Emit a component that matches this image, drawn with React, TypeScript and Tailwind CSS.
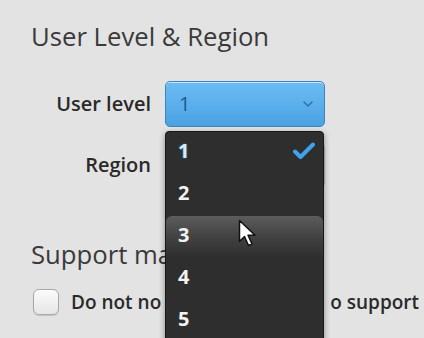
import { useState } from "react";

const levels = ["1", "2", "3", "4", "5"];

function Chevron() {
  return (
    <svg width="12" height="8" viewBox="0 0 12 8" fill="none">
      <path d="M2 2l4 4 4-4" stroke="#2f6fa8" strokeWidth="1.4" strokeLinecap="round" strokeLinejoin="round" />
    </svg>
  );
}

function Check() {
  return (
    <svg width="22" height="18" viewBox="0 0 22 18" fill="none">
      <path d="M2 9.5l5.5 5.5L20 2.5" stroke="#3ea3ea" strokeWidth="4" strokeLinecap="round" strokeLinejoin="round" />
    </svg>
  );
}

function Cursor() {
  return (
    <svg width="20" height="28" viewBox="0 0 20 28">
      <path d="M1.5 1.5v21l5-5 4 9 3.5-1.6-4-8.6h7z" fill="#fff" stroke="#111" strokeWidth="1.5" strokeLinejoin="round" />
    </svg>
  );
}

export default function App() {
  const [selected] = useState("1");
  const hovered = "3";

  return (
    <div className="h-[338px] w-[424px] overflow-hidden bg-[#e3e3e3] pl-[31px] pt-[20px] text-[#333] [font-family:'Open_Sans',sans-serif]">
      <h2 className="text-[25.7px] leading-[34px] font-normal text-[#3a3a3a]">User Level &amp; Region</h2>

      <div className="relative mt-[27px] grid grid-cols-[120px_160px] gap-x-[14px] gap-y-[15px] items-center">
        <span className="text-right text-[20px] font-semibold text-[#2a2a2a]">User level</span>
        <div className="flex h-[46px] items-center justify-between rounded-[5px] border border-[#3b84c0] bg-gradient-to-b from-[#6bbcf3] to-[#4aa2e3] pl-[13px] pr-[10px] shadow-[0_1px_0_#cfe6f7_inset]">
          <span className="text-[20px] text-[#1f5a92]">1</span>
          <Chevron />
        </div>

        <span className="text-right text-[20px] font-semibold text-[#2a2a2a]">Region</span>
        <div className="h-[46px] rounded-[5px] border border-[#b5b5b5] bg-[#f1f1f1]" />

        {/* open dropdown */}
        <div className="absolute left-[134px] top-[50px] z-10 w-[159px] overflow-hidden rounded-t-[4px] border border-[#181818] bg-[#2e2e2e] shadow-[0_2px_6px_rgba(0,0,0,0.4)]">
          {levels.map((level) => {
            const isSel = level === selected;
            const isHover = level === hovered;
            return (
              <div
                key={level}
                className={
                  isHover
                    ? "relative flex h-[42px] items-center justify-between rounded-t-[6px] bg-gradient-to-b from-[#5c5c5c] via-[#424242] to-[#2e2e2e] pb-[4px] pl-[12px] pr-[8px]"
                    : "flex h-[42px] items-center justify-between pb-[4px] pl-[12px] pr-[8px]"
                }
              >
                <span
                  className={
                    isSel
                      ? "text-[20px] font-bold text-[#d7ebf8] [text-shadow:0_0_2px_#3b8fd0]"
                      : "text-[20px] font-bold text-[#f2f2f2]"
                  }
                >
                  {level}
                </span>
                {isSel ? <Check /> : null}
                {isHover ? (
                  <span className="absolute left-[72px] top-[3px]">
                    <Cursor />
                  </span>
                ) : null}
              </div>
            );
          })}
        </div>
      </div>

      <h2 className="mt-[50px] text-[25.7px] leading-[34px] font-normal text-[#3a3a3a]">Support ma</h2>

      <label className="mt-[16px] flex items-center gap-[12px] pl-[2px]">
        <span className="h-[26px] w-[26px] shrink-0 rounded-[6px] border border-[#a9a9a9] bg-gradient-to-b from-[#fbfbfb] to-[#e6e6e6] shadow-[0_1px_1px_rgba(0,0,0,0.15)]" />
        <span className="whitespace-nowrap text-[19px] font-semibold text-[#2a2a2a]">
          Do not no<span className="inline-block w-[169px]" />o support
        </span>
      </label>
    </div>
  );
}
